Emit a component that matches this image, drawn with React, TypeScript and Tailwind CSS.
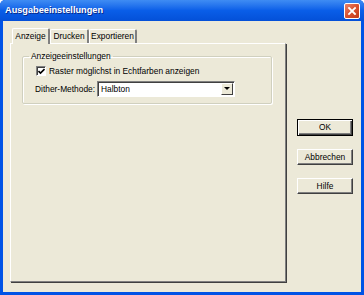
import React from "react";

export default function App() {
  const font = { fontFamily: '"Liberation Sans", Arial, sans-serif' };
  return (
    <div
      className="w-[364px] h-[295px] flex flex-col overflow-hidden bg-[#0053e6] rounded-t-[5px]"
      style={font}
    >
      {/* Title bar */}
      <div className="h-[21px] shrink-0 flex items-center justify-between pl-[5px] pr-[4px] bg-gradient-to-b from-[#3f8cf3] via-[#0a5ee8] to-[#0450d8] rounded-t-[5px]">
        <span className="text-white font-bold text-[9.2px] leading-none [text-shadow:1px_1px_0_#0a2a8a] mt-[1px]">
          Ausgabeeinstellungen
        </span>
        <div className="w-[16px] h-[16px] mt-[1px] rounded-[2px] border border-white bg-gradient-to-br from-[#e9826a] via-[#d9512f] to-[#c23a18] flex items-center justify-center">
          <svg width="10" height="10" viewBox="0 0 10 10">
            <path d="M2 2 L8 8 M8 2 L2 8" stroke="white" strokeWidth="1.8" strokeLinecap="square" />
          </svg>
        </div>
      </div>

      {/* Body */}
      <div className="flex-1 mx-[3px] mb-[3px] bg-[#ece9d8] flex pl-[7px] pt-[6px]">
        {/* Tabs column */}
        <div className="w-[276px] h-[255px] flex flex-col">
          <div className="h-[16px] flex items-end pl-[2px] text-[8.4px] text-black">
            <div className="h-[16px] w-[38px] bg-[#ece9d8] border-t border-l border-white border-r-2 border-r-[#808080] rounded-t-[2px] flex items-center justify-center relative top-[1px] z-10">
              Anzeige
            </div>
            <div className="h-[14px] w-[39px] border-t border-l border-white border-r-2 border-r-[#808080] rounded-t-[2px] flex items-center justify-center">
              Drucken
            </div>
            <div className="h-[14px] w-[48px] border-t border-l border-white border-r-2 border-r-[#808080] rounded-t-[2px] flex items-center justify-center">
              Exportieren
            </div>
          </div>
          <div className="flex-1 border-t border-l border-white border-r border-b border-r-[#808080] border-b-[#808080] shadow-[1px_1px_0_#404040] pl-[11px] pr-[13px] pt-[8px]">
            <fieldset className="border border-[#d0d0bf] rounded-[2px] h-[52px] pl-[13px] pt-[2px] shadow-[inset_1px_1px_0_#fff,1px_1px_0_#fff]">
              <legend className="text-[8.4px] px-[2px] ml-[-7px] leading-none text-black">
                Anzeigeeinstellungen
              </legend>
              <div className="flex items-center h-[12px] mt-[3px]">
                <div className="w-[10px] h-[10px] bg-white border border-t-[#808080] border-l-[#808080] border-r-white border-b-white shadow-[inset_1px_1px_0_#404040] flex items-center justify-center">
                  <svg width="7" height="7" viewBox="0 0 7 7">
                    <path d="M0.5 3 L2.5 5 L6.5 1" stroke="black" strokeWidth="1.6" fill="none" />
                  </svg>
                </div>
                <span className="ml-[3px] text-[8.4px] text-black">
                  Raster möglichst in Echtfarben anzeigen
                </span>
              </div>
              <div className="flex items-center mt-[4px] -ml-[1px]">
                <span className="text-[8.4px] text-black w-[62px]">Dither-Methode:</span>
                <div className="w-[138px] h-[16px] bg-white border border-t-[#808080] border-l-[#808080] border-r-white border-b-white shadow-[inset_1px_1px_0_#404040] flex items-center">
                  <span className="flex-1 pl-[3px] text-[8.4px] text-black">Halbton</span>
                  <div className="w-[12px] h-[12px] mr-[1px] bg-[#ece9d8] border border-t-white border-l-white border-r-[#404040] border-b-[#404040] flex items-center justify-center">
                    <svg width="6" height="4" viewBox="0 0 6 4">
                      <path d="M0 0 L6 0 L3 3 Z" fill="black" />
                    </svg>
                  </div>
                </div>
              </div>
            </fieldset>
          </div>
        </div>

        {/* Buttons */}
        <div className="ml-[11px] w-[56px] flex flex-col pt-[92px] gap-[13px] text-[8.4px] text-black">
          <button className="h-[17px] w-[56px] border border-black bg-[#ece9d8] shadow-[inset_1px_1px_0_#fff,inset_-1px_-1px_0_#404040,inset_-2px_-2px_0_#808080] flex items-center justify-center">
            OK
          </button>
          <button className="h-[16px] w-[56px] border border-t-white border-l-white border-r-[#404040] border-b-[#404040] bg-[#ece9d8] shadow-[inset_-1px_-1px_0_#808080] flex items-center justify-center">
            Abbrechen
          </button>
          <button className="h-[16px] w-[56px] border border-t-white border-l-white border-r-[#404040] border-b-[#404040] bg-[#ece9d8] shadow-[inset_-1px_-1px_0_#808080] flex items-center justify-center">
            Hilfe
          </button>
        </div>
      </div>
    </div>
  );
}
